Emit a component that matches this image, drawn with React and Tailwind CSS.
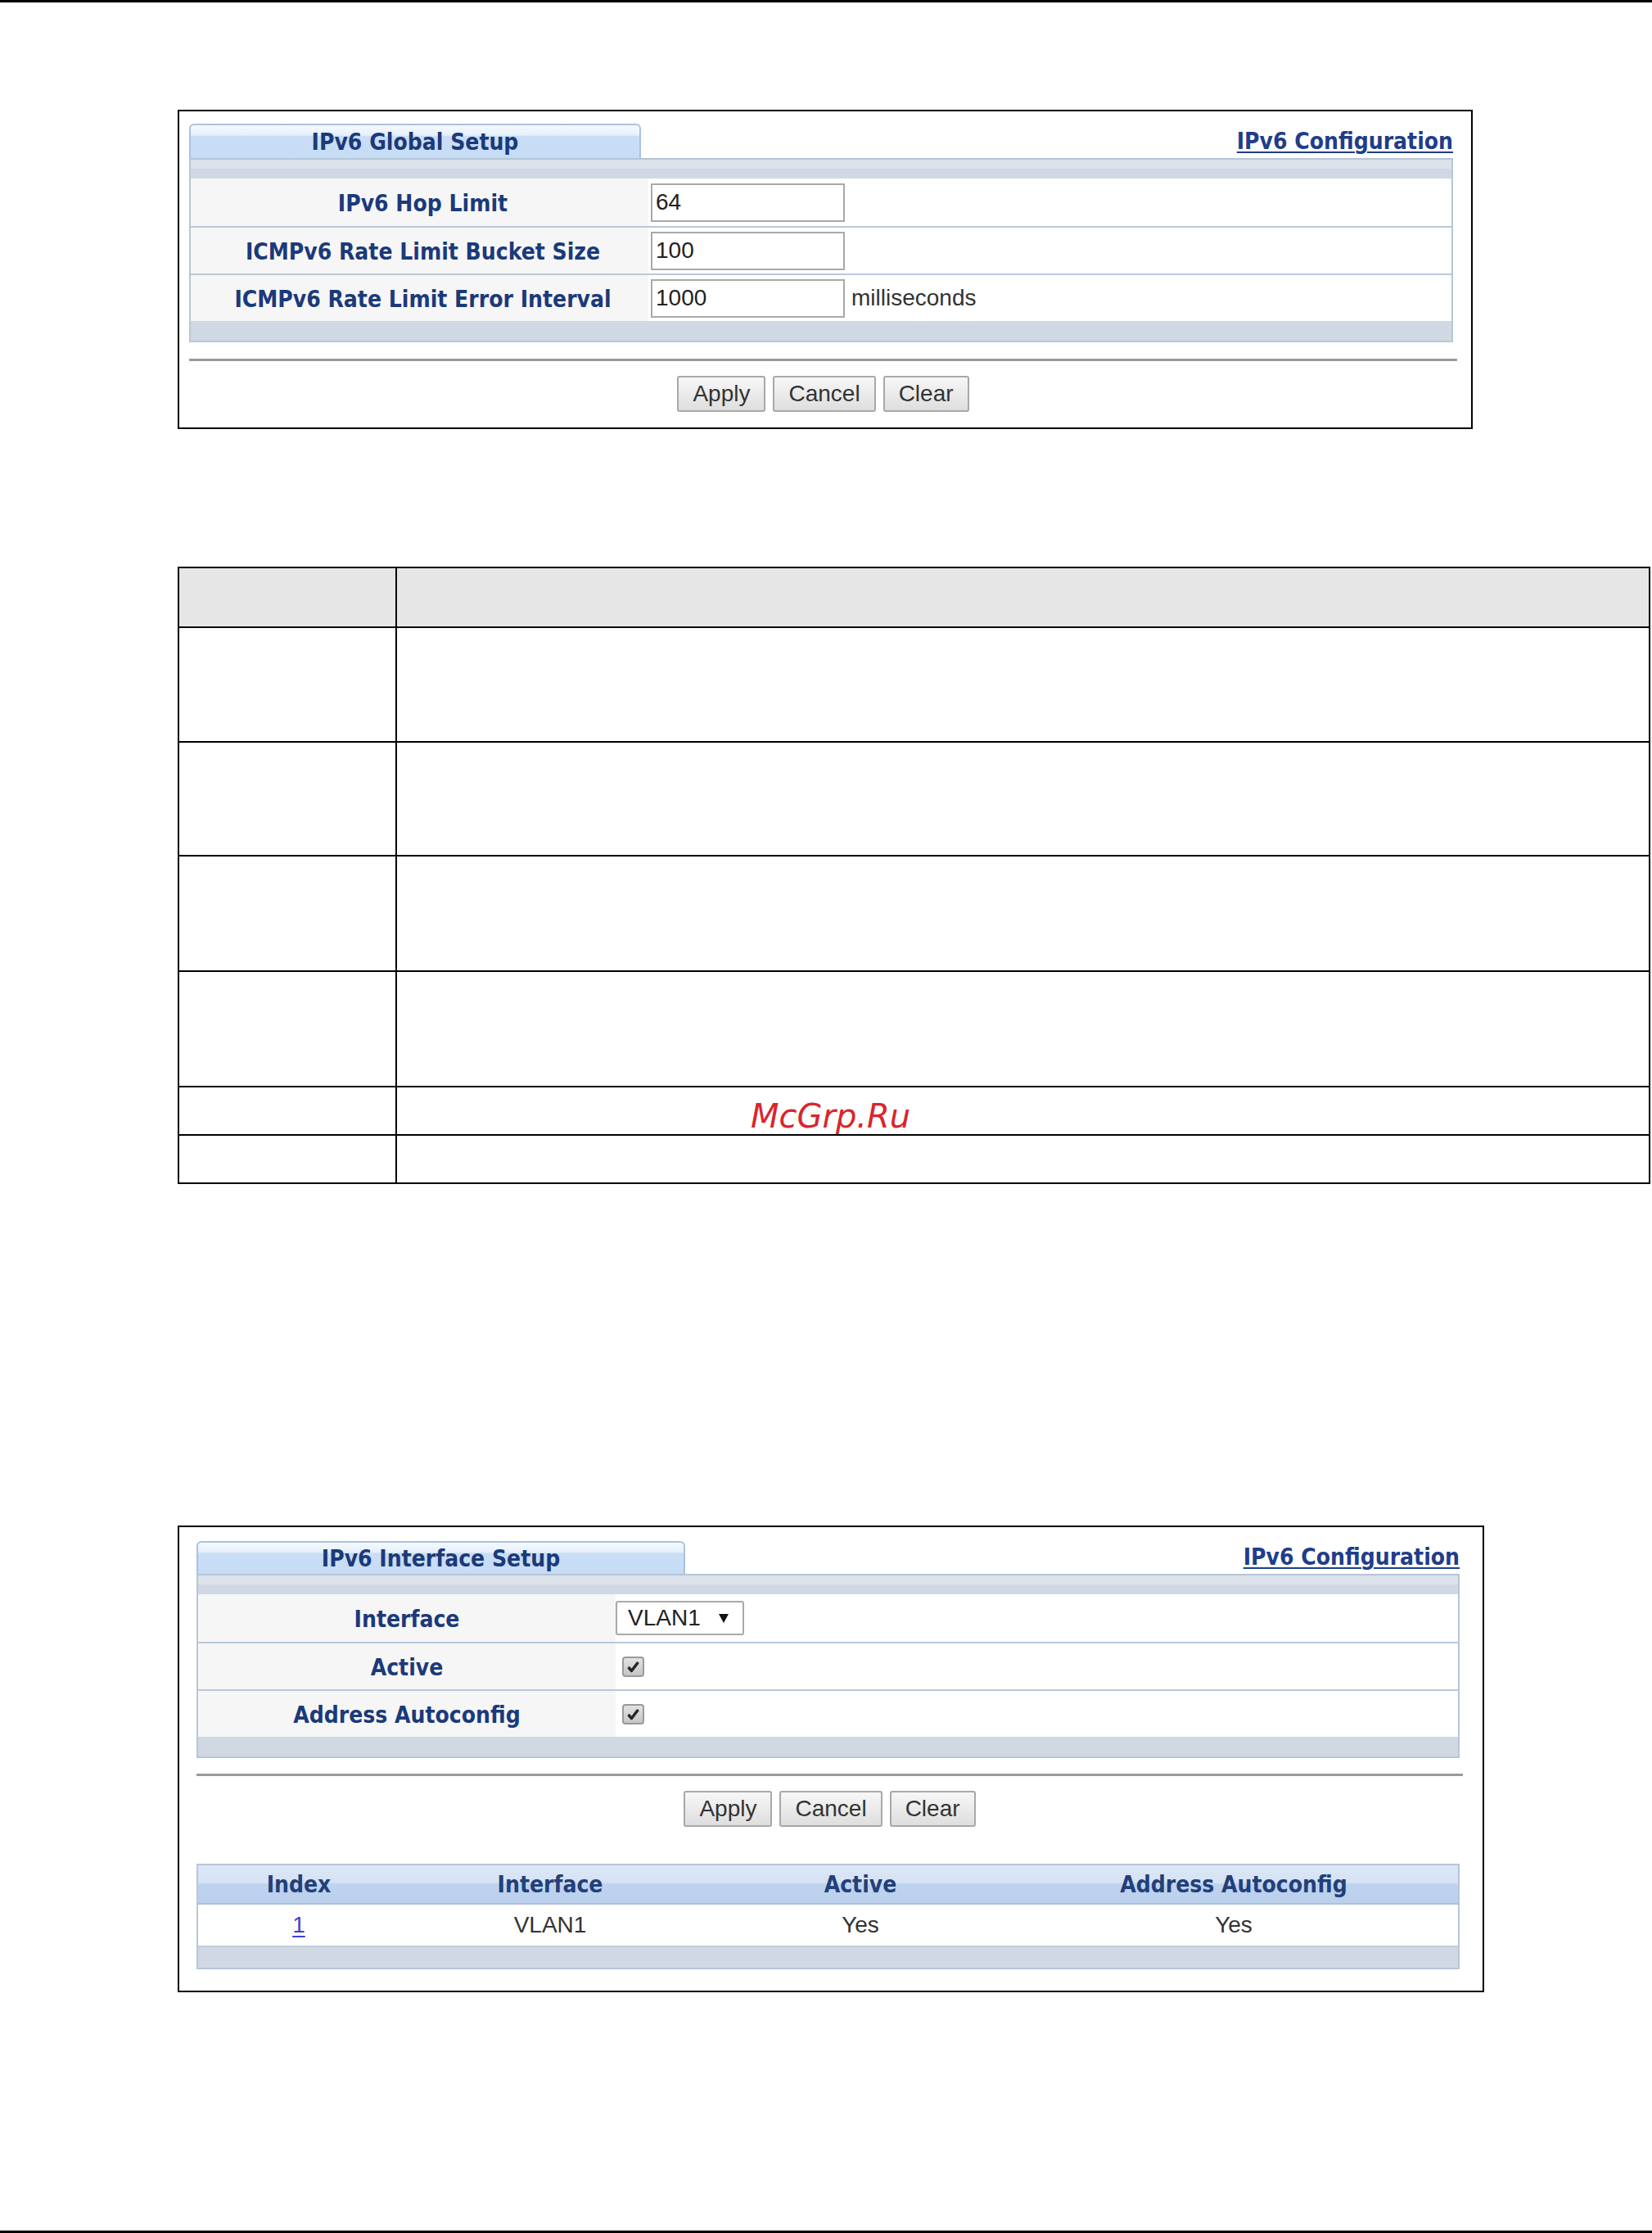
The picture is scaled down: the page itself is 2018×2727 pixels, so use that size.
const boldFont = "font-['DejaVu_Sans_Condensed','DejaVu_Sans',sans-serif] font-bold";
const plainFont = "font-['Liberation_Sans',Arial,sans-serif]";

function Tab({ className, children }) {
  return (
    <div
      className={`${className} h-full rounded-t-[6px] border-2 border-b-0 border-[#a9c2e2] bg-[linear-gradient(to_bottom,#f5f9fe_0%,#e6f0fb_30%,#c9def6_34%,#c6dcf5_100%)] flex items-center justify-center pt-[1px] ${boldFont} text-[28px] leading-none text-[#1b3a7a]`}
    >
      {children}
    </div>
  );
}

function ConfigLink() {
  return (
    <a
      href="#"
      className={`self-end mb-[6px] ${boldFont} text-[28px] leading-none text-[#1f3d8a] underline decoration-2 underline-offset-[3px]`}
    >
      IPv6 Configuration
    </a>
  );
}

function TopBar() {
  return (
    <div className="border-t-2 border-[#b5c4d8]">
      <div className="h-[11px] bg-[#dde3ea]" />
      <div className="h-[12px] bg-[#d0d8e3]" />
    </div>
  );
}

function Buttons({ className }) {
  return (
    <div className={`${className} flex justify-center gap-[9px]`}>
      {['Apply', 'Cancel', 'Clear'].map((label) => (
        <button
          key={label}
          type="button"
          className={`h-[44px] px-[17px] rounded-[3px] border-2 border-[#a8a8a8] bg-[linear-gradient(to_bottom,#f7f7f7,#dedede)] ${plainFont} text-[28px] leading-none text-[#333]`}
        >
          {label}
        </button>
      ))}
    </div>
  );
}

function FieldRow({ label, first, labelClass, children }) {
  return (
    <div className={`h-[58px] flex ${first ? '' : 'border-t-2 border-[#b9c8db]'}`}>
      <div className={`${labelClass} h-full bg-[#f6f6f6] flex items-center justify-center ${boldFont} text-[28px] leading-none text-[#1b3a7a]`}>
        {label}
      </div>
      <div className="flex-1 h-full bg-white flex items-center">{children}</div>
    </div>
  );
}

function TextBox({ value }) {
  return (
    <input
      type="text"
      defaultValue={value}
      className={`w-[237px] h-[47px] ml-[3px] border-2 border-[#a9a9a9] bg-white pl-[4px] ${plainFont} text-[28px] text-[#222] outline-none`}
    />
  );
}

function CheckBox() {
  return (
    <div className="ml-[8px] w-[27px] h-[25px] rounded-[4px] border-2 border-[#9a9a9a] bg-[linear-gradient(to_bottom,#e2e2e2,#c6c6c6)] flex items-center justify-center">
      <svg width="17" height="15" viewBox="0 0 17 15">
        <path d="M2.5 8 L6.5 12.5 L14.5 2" fill="none" stroke="#262626" strokeWidth="3.4" strokeLinejoin="round" />
      </svg>
    </div>
  );
}

const descRows = [140, 139, 141, 141, 59, 57];
const globalLabel = 'w-[559px] pl-[8px] pt-[4px]';
const ifaceLabel = 'w-[510px] pt-[3px]';

export default function App() {
  return (
    <div className="min-h-[2727px] w-[2018px] bg-white flex flex-col">
      <div className="h-[3px] bg-black" />

      {/* IPv6 Global Setup */}
      <div className="ml-[217px] mt-[131px] w-[1582px] border-2 border-black pl-[12px] pt-[15px] pb-[19px]">
        <div className="w-[1549px]">
          <div className="w-[1544px] h-[42px] flex justify-between">
            <Tab className="w-[552px]">IPv6 Global Setup</Tab>
            <ConfigLink />
          </div>
          <div className="w-[1544px] border-x-2 border-b-2 border-[#b7c6d9]">
            <TopBar />
            <FieldRow first label="IPv6 Hop Limit" labelClass={globalLabel}>
              <TextBox value="64" />
            </FieldRow>
            <FieldRow label="ICMPv6 Rate Limit Bucket Size" labelClass={globalLabel}>
              <TextBox value="100" />
            </FieldRow>
            <FieldRow label="ICMPv6 Rate Limit Error Interval" labelClass={globalLabel}>
              <TextBox value="1000" />
              <span className={`ml-[8px] ${plainFont} text-[28px] text-[#333]`}>milliseconds</span>
            </FieldRow>
            <div className="h-[24px] bg-[#d0d8e3]" />
          </div>
          <div className="mt-[20px] h-[3px] bg-[#9a9a9a]" />
          <Buttons className="mt-[18px]" />
        </div>
      </div>

      {/* description table */}
      <div className="ml-[217px] mt-[168px] w-[1799px] border-2 border-black">
        <div className="h-[73px] grid grid-cols-[266px_1fr] bg-[#e6e6e6] border-b-2 border-black">
          <div className="border-r-2 border-black" />
          <div />
        </div>
        {descRows.map((h, i) => (
          <div
            key={i}
            style={{ height: h }}
            className={`grid grid-cols-[266px_1fr] ${i < descRows.length - 1 ? 'border-b-2 border-black' : ''}`}
          >
            <div className="border-r-2 border-black" />
            <div className="flex items-end pl-[432px] pb-[2px] overflow-visible">
              {i === 4 && (
                <span className="font-['DejaVu_Sans',sans-serif] italic text-[40px] leading-none text-[#d8262c]">
                  McGrp.Ru
                </span>
              )}
            </div>
          </div>
        ))}
      </div>

      {/* IPv6 Interface Setup */}
      <div className="ml-[217px] mt-[417px] w-[1596px] border-2 border-black pl-[21px] pt-[17px] pb-[26px]">
        <div className="w-[1547px]">
          <div className="w-[1543px] h-[40px] flex justify-between">
            <Tab className="w-[597px]">IPv6 Interface Setup</Tab>
            <ConfigLink />
          </div>
          <div className="w-[1543px] border-x-2 border-b-2 border-[#b7c6d9]">
            <TopBar />
            <FieldRow first label="Interface" labelClass={ifaceLabel}>
              <div className="w-[157px] h-[42px] rounded-[3px] border-2 border-[#a9a9a9] bg-white flex items-center pl-[13px]">
                <span className={`${plainFont} text-[28px] leading-none text-[#222]`}>VLAN1</span>
                <svg className="ml-[22px]" width="12" height="11" viewBox="0 0 12 11">
                  <polygon points="0,0 12,0 6,11" fill="#111" />
                </svg>
              </div>
            </FieldRow>
            <FieldRow label="Active" labelClass={ifaceLabel}>
              <CheckBox />
            </FieldRow>
            <FieldRow label="Address Autoconfig" labelClass={ifaceLabel}>
              <CheckBox />
            </FieldRow>
            <div className="h-[24px] bg-[#d0d8e3]" />
          </div>
          <div className="mt-[19px] h-[3px] bg-[#9a9a9a]" />
          <Buttons className="mt-[18px]" />

          <div className="mt-[45px] w-[1543px] border-2 border-[#b7c6d9]">
            <div className={`h-[48px] grid grid-cols-[246px_368px_390px_522px] items-center bg-[linear-gradient(to_bottom,#dbe7f6_0%,#d6e3f4_46%,#bdd3ef_50%,#bad0ec_100%)] border-b-2 border-[#aec1d9] ${boldFont} text-[28px] leading-none text-[#22407a] text-center pt-[2px]`}>
              <span>Index</span>
              <span>Interface</span>
              <span>Active</span>
              <span>Address Autoconfig</span>
            </div>
            <div className={`h-[50px] grid grid-cols-[246px_368px_390px_522px] items-center bg-white ${plainFont} text-[28px] leading-none text-[#333] text-center`}>
              <span>
                <a href="#" className="text-[#3f3fd8] underline decoration-2 underline-offset-[4px]">1</a>
              </span>
              <span>VLAN1</span>
              <span>Yes</span>
              <span>Yes</span>
            </div>
            <div className="h-[27px] bg-[#d0d8e3] border-t-2 border-[#c0ccda]" />
          </div>
        </div>
      </div>

      <div className="mt-auto h-[3px] bg-black" />
    </div>
  );
}
